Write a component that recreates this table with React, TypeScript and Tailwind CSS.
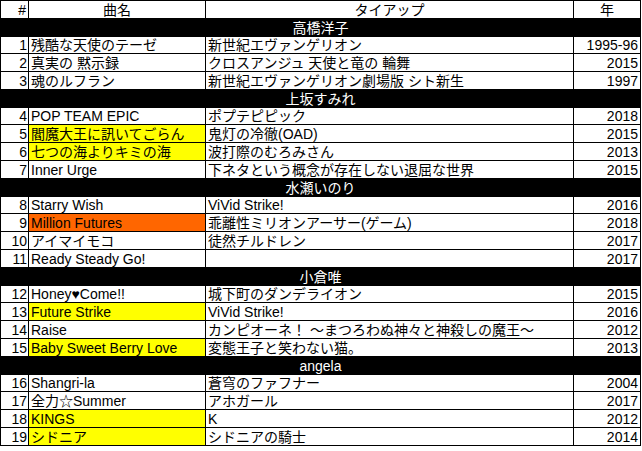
import React from "react";

type Row =
  | { kind: "group"; name: string }
  | { kind: "song"; n: number; title: string; tie: string; year: string; hl?: "y" | "o" };

const rows: Row[] = [
  { kind: "group", name: "高橋洋子" },
  { kind: "song", n: 1, title: "残酷な天使のテーゼ", tie: "新世紀エヴァンゲリオン", year: "1995-96" },
  { kind: "song", n: 2, title: "真実の 黙示録", tie: "クロスアンジュ 天使と竜の 輪舞", year: "2015" },
  { kind: "song", n: 3, title: "魂のルフラン", tie: "新世紀エヴァンゲリオン劇場版 シト新生", year: "1997" },
  { kind: "group", name: "上坂すみれ" },
  { kind: "song", n: 4, title: "POP TEAM EPIC", tie: "ポプテピピック", year: "2018" },
  { kind: "song", n: 5, title: "閻魔大王に訊いてごらん", tie: "鬼灯の冷徹(OAD)", year: "2015", hl: "y" },
  { kind: "song", n: 6, title: "七つの海よりキミの海", tie: "波打際のむろみさん", year: "2013", hl: "y" },
  { kind: "song", n: 7, title: "Inner Urge", tie: "下ネタという概念が存在しない退屈な世界", year: "2015" },
  { kind: "group", name: "水瀬いのり" },
  { kind: "song", n: 8, title: "Starry Wish", tie: "ViVid Strike!", year: "2016" },
  { kind: "song", n: 9, title: "Million Futures", tie: "乖離性ミリオンアーサー(ゲーム)", year: "2018", hl: "o" },
  { kind: "song", n: 10, title: "アイマイモコ", tie: "徒然チルドレン", year: "2017" },
  { kind: "song", n: 11, title: "Ready Steady Go!", tie: "", year: "2017" },
  { kind: "group", name: "小倉唯" },
  { kind: "song", n: 12, title: "Honey♥Come!!", tie: "城下町のダンデライオン", year: "2015" },
  { kind: "song", n: 13, title: "Future Strike", tie: "ViVid Strike!", year: "2016", hl: "y" },
  { kind: "song", n: 14, title: "Raise", tie: "カンピオーネ！ ～まつろわぬ神々と神殺しの魔王～", year: "2012" },
  { kind: "song", n: 15, title: "Baby Sweet Berry Love", tie: "変態王子と笑わない猫。", year: "2013", hl: "y" },
  { kind: "group", name: "angela" },
  { kind: "song", n: 16, title: "Shangri-la", tie: "蒼穹のファフナー", year: "2004" },
  { kind: "song", n: 17, title: "全力☆Summer", tie: "アホガール", year: "2017" },
  { kind: "song", n: 18, title: "KINGS", tie: "K", year: "2012", hl: "y" },
  { kind: "song", n: 19, title: "シドニア", tie: "シドニアの騎士", year: "2014", hl: "y" },
];

const cell = "h-[17px] flex items-end leading-[16px] whitespace-nowrap overflow-hidden border-r border-black";

export default function App() {
  return (
    <div className="w-[642px] h-[451px] bg-white">
      <div
        className="w-[641px] border-l border-t border-black text-black text-[14px]"
        style={{ fontFamily: '"Liberation Sans", "Noto Sans CJK JP", sans-serif' }}
      >
        <div className="flex border-b border-black">
          <div className={`${cell} w-[28px] justify-end pr-[2px]`}>#</div>
          <div className={`${cell} w-[177px] justify-center`}>曲名</div>
          <div className={`${cell} w-[368px] justify-center`}>タイアップ</div>
          <div className={`${cell} w-[67px] justify-center`}>年</div>
        </div>
        {rows.map((r, i) =>
          r.kind === "group" ? (
            <div key={i} className="flex h-[18px] -mb-px bg-black text-white border-r border-black">
              <div className="h-[17px] w-full flex items-end justify-center leading-[16px]">{r.name}</div>
            </div>
          ) : (
            <div key={i} className="flex border-b border-black">
              <div className={`${cell} w-[28px] justify-end pr-[1px]`}>{r.n}</div>
              <div
                className={`${cell} w-[177px] pl-[2px] ${
                  r.hl === "y" ? "bg-[#ffff00]" : r.hl === "o" ? "bg-[#ff6600]" : ""
                }`}
              >
                {r.title}
              </div>
              <div className={`${cell} w-[368px] pl-[2px]`}>{r.tie}</div>
              <div className={`${cell} w-[67px] justify-end pr-[2px]`}>{r.year}</div>
            </div>
          )
        )}
      </div>
    </div>
  );
}
